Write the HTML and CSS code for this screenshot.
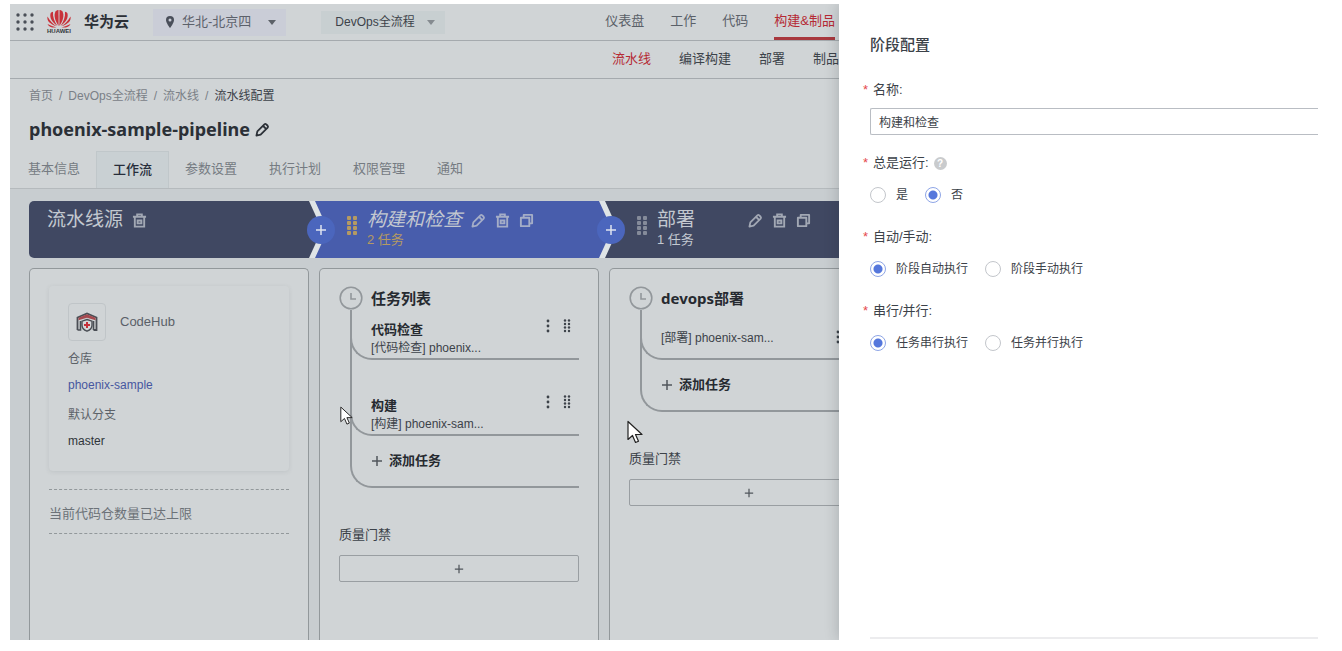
FILE: index.html
```html
<!DOCTYPE html>
<html lang="zh-CN">

  <head>
    <meta charset="utf-8">
    <title>流水线配置</title>
    <link rel="stylesheet" href="styles.css">
  </head>

  <body>

    <!-- shared icons -->
    <svg class="defs" aria-hidden="true">
      <symbol id="pencil" viewBox="0 0 16 16">
        <path d="M1.500 14.500l1-4.500L10 2.500a1.500 1.500 0 0 1 2 0l1.500 1.500a1.500 1.500 0 0 1 0 2L6 13.500z M8.500 4l3.500 3.500" fill="none" stroke="currentColor" stroke-width="1.900" stroke-linejoin="round"/>
      </symbol>
      <symbol id="trash" viewBox="0 0 16 16">
        <path d="M1 4h14M5.500 3.500V1.500h5v2M3 4.500v10h10v-10M6 8h4v3H6z" fill="none" stroke="currentColor" stroke-width="2"/>
      </symbol>
      <symbol id="copy" viewBox="0 0 16 16">
        <path d="M2 5h9v9H2zM5 4.500V2h9v9h-2.500" fill="none" stroke="currentColor" stroke-width="2" stroke-linejoin="round"/>
      </symbol>
      <symbol id="grip" viewBox="0 0 12 20">
        <g fill="currentColor">
          <rect x="1" y="0" width="4" height="4" rx="1"/><rect x="7" y="0" width="4" height="4" rx="1"/>
          <rect x="1" y="5" width="4" height="4" rx="1"/><rect x="7" y="5" width="4" height="4" rx="1"/>
          <rect x="1" y="10" width="4" height="4" rx="1"/><rect x="7" y="10" width="4" height="4" rx="1"/>
          <rect x="1" y="15" width="4" height="4" rx="1"/><rect x="7" y="15" width="4" height="4" rx="1"/>
        </g>
      </symbol>
      <symbol id="dots" viewBox="0 0 8 14">
        <g fill="currentColor">
          <circle cx="4" cy="2" r="1.400"/><circle cx="4" cy="7" r="1.400"/><circle cx="4" cy="12" r="1.400"/>
        </g>
      </symbol>
      <symbol id="drag" viewBox="0 0 8 14">
        <g fill="currentColor">
          <circle cx="2" cy="1.500" r="1.200"/><circle cx="6" cy="1.500" r="1.200"/>
          <circle cx="2" cy="5" r="1.200"/><circle cx="6" cy="5" r="1.200"/>
          <circle cx="2" cy="8.500" r="1.200"/><circle cx="6" cy="8.500" r="1.200"/>
          <circle cx="2" cy="12" r="1.200"/><circle cx="6" cy="12" r="1.200"/>
        </g>
      </symbol>
      <symbol id="plus" viewBox="0 0 12 12">
        <path d="M6 1v10M1 6h10" fill="none" stroke="currentColor" stroke-width="1.500"/>
      </symbol>
      <symbol id="clock" viewBox="0 0 24 24">
        <circle cx="12" cy="12" r="10.800" fill="none" stroke="currentColor" stroke-width="1.600"/>
        <path d="M12 7v6h5" fill="none" stroke="currentColor" stroke-width="1.600"/>
      </symbol>
      <symbol id="pointer" viewBox="0 0 16 24">
        <path d="M1 1v18l4.500-4 3 7 3-1.300-3-6.700H15z" fill="#fff" stroke="#222" stroke-width="1.200" stroke-linejoin="round"/>
      </symbol>
    </svg>

    <div class="app">

      <div class="workspace">

        <header class="topbar">
          <button class="apps" aria-label="菜单">
            <svg width="18" height="18" viewBox="0 0 18 18" fill="#4a4f57">
              <circle cx="2" cy="2" r="1.700"/><circle cx="9" cy="2" r="1.700"/><circle cx="16" cy="2" r="1.700"/>
              <circle cx="2" cy="9" r="1.700"/><circle cx="9" cy="9" r="1.700"/><circle cx="16" cy="9" r="1.700"/>
              <circle cx="2" cy="16" r="1.700"/><circle cx="9" cy="16" r="1.700"/><circle cx="16" cy="16" r="1.700"/>
            </svg>
          </button>
          <a class="logo" href="#">
            <svg width="26" height="18" viewBox="0 0 26 18" fill="#c8323a">
              <path d="M12.600 16C9 11 7.500 5 9.500 1.500 10.500.3 12 0 12.500 0z"/>
              <path d="M13.400 16C17 11 18.500 5 16.500 1.500 15.500.3 14 0 13.500 0z"/>
              <path d="M11.500 16C6 12 3.500 8 4.500 3.500 5 2.500 6 2 7 1.800 6.500 7 8.500 12 11.500 16z"/>
              <path d="M14.500 16C20 12 22.500 8 21.500 3.500 21 2.500 20 2 19 1.800 19.500 7 17.500 12 14.500 16z"/>
              <path d="M10.500 16.300C4 14 .5 11 1.500 6.500 4 11 6.500 13.500 10.500 16.300z"/>
              <path d="M15.500 16.300C22 14 25.500 11 24.500 6.500 22 11 19.500 13.500 15.500 16.300z"/>
              <path d="M10.500 17.500C6 18 3 17 1.500 14c3 1.700 6 2.500 9 3.500z"/>
              <path d="M15.500 17.500C20 18 23 17 24.500 14c-3 1.700-6 2.500-9 3.500z"/>
            </svg>
            <span class="logo-name">HUAWEI</span>
          </a>
          <span class="brand">华为云</span>
          <button class="region">
            <svg width="8" height="12" viewBox="0 0 8 12"><path d="M4 0a4 4 0 0 1 4 4c0 3-4 8-4 8S0 7 0 4a4 4 0 0 1 4-4z" fill="#4a4f5a"/><circle cx="4" cy="4" r="1.500" fill="#cbced8"/></svg>
            <span>华北-北京四</span>
            <i class="caret"></i>
          </button>
          <button class="project"><span>DevOps全流程</span><i class="caret"></i></button>
          <nav class="main-nav">
            <a href="#">仪表盘</a>
            <a href="#">工作</a>
            <a href="#">代码</a>
            <a href="#" class="active">构建&amp;制品</a>
          </nav>
        </header>

        <nav class="sub-nav">
          <a href="#" class="active">流水线</a>
          <a href="#">编译构建</a>
          <a href="#">部署</a>
          <a href="#">制品</a>
        </nav>

        <div class="breadcrumb">
          <a href="#">首页</a><span class="sep">/</span><a href="#">DevOps全流程</a><span class="sep">/</span><a href="#">流水线</a><span class="sep">/</span><span class="current">流水线配置</span>
        </div>

        <div class="page-title">
          <h1>phoenix-sample-pipeline</h1>
          <button class="icon-btn" aria-label="编辑"><svg width="15" height="15"><use href="#pencil"/></svg></button>
        </div>

        <nav class="tabs">
          <a href="#">基本信息</a>
          <a href="#" class="active">工作流</a>
          <a href="#">参数设置</a>
          <a href="#">执行计划</a>
          <a href="#">权限管理</a>
          <a href="#">通知</a>
        </nav>

        <main class="flow">

          <div class="heads">
            <div class="head first">
              <div class="head-text">
                <h2>流水线源</h2>
              </div>
              <button class="icon-btn" aria-label="删除"><svg width="15" height="15"><use href="#trash"/></svg></button>
            </div>

            <div class="head selected">
              <button class="add-stage" aria-label="添加阶段"><svg width="12" height="12"><use href="#plus"/></svg></button>
              <svg class="grip" width="12" height="20"><use href="#grip"/></svg>
              <div class="head-text">
                <h2>构建和检查</h2>
                <p>2 任务</p>
              </div>
              <button class="icon-btn" aria-label="编辑"><svg width="15" height="15"><use href="#pencil"/></svg></button>
              <button class="icon-btn" aria-label="删除"><svg width="15" height="15"><use href="#trash"/></svg></button>
              <button class="icon-btn" aria-label="复制"><svg width="15" height="15"><use href="#copy"/></svg></button>
            </div>

            <div class="head">
              <button class="add-stage" aria-label="添加阶段"><svg width="12" height="12"><use href="#plus"/></svg></button>
              <svg class="grip" width="12" height="20"><use href="#grip"/></svg>
              <div class="head-text">
                <h2>部署</h2>
                <p>1 任务</p>
              </div>
              <button class="icon-btn" aria-label="编辑"><svg width="15" height="15"><use href="#pencil"/></svg></button>
              <button class="icon-btn" aria-label="删除"><svg width="15" height="15"><use href="#trash"/></svg></button>
              <button class="icon-btn" aria-label="复制"><svg width="15" height="15"><use href="#copy"/></svg></button>
            </div>
          </div>

          <div class="stages">

            <section class="stage">
              <div class="source">
                <div class="source-head">
                  <span class="source-icon">
                    <svg width="22" height="20" viewBox="0 0 22 20">
                      <path d="M1.500 18V5.500L11 1.500l9.500 4V18h-3" fill="none" stroke="#4a4e55" stroke-width="1.800"/>
                      <path d="M1.500 18h3V9" fill="none" stroke="#4a4e55" stroke-width="1.600"/>
                      <path d="M17.500 9v9" stroke="#4a4e55" stroke-width="1.600"/>
                      <path d="M2.500 5.800L11 2.300l8.500 3.500v2.400L11 5.700 2.500 8.200z" fill="#a5494f"/>
                      <path d="M11 7.500l5 1.700v4c0 3-2.500 5-5 6-2.500-1-5-3-5-6v-4z" fill="#d5d8da" stroke="#4a4e55" stroke-width="1.400"/>
                      <path d="M11 10v6M8 13h6" stroke="#c5303a" stroke-width="2"/>
                    </svg>
                  </span>
                  <span class="source-name">CodeHub</span>
                </div>
                <dl>
                  <dt>仓库</dt>
                  <dd><a href="#">phoenix-sample</a></dd>
                  <dt>默认分支</dt>
                  <dd>master</dd>
                </dl>
              </div>
              <p class="limit">当前代码仓数量已达上限</p>
            </section>

            <section class="stage">
              <div class="group-title">
                <svg width="24" height="24"><use href="#clock"/></svg>
                <h3>任务列表</h3>
              </div>
              <ul class="tasks">
                <li class="task">
                  <div class="task-text">
                    <h4>代码检查</h4>
                    <p>[代码检查] phoenix...</p>
                  </div>
                  <svg width="8" height="14"><use href="#dots"/></svg>
                  <svg width="8" height="14"><use href="#drag"/></svg>
                </li>
                <li class="task spaced">
                  <div class="task-text">
                    <h4>构建</h4>
                    <p>[构建] phoenix-sam...</p>
                  </div>
                  <svg width="8" height="14"><use href="#dots"/></svg>
                  <svg width="8" height="14"><use href="#drag"/></svg>
                </li>
                <li class="add"><button><svg width="12" height="12"><use href="#plus"/></svg>添加任务</button></li>
              </ul>
              <h5>质量门禁</h5>
              <button class="gate" aria-label="添加质量门禁"><svg width="10" height="10"><use href="#plus"/></svg></button>
              <svg class="pointer" width="13" height="20"><use href="#pointer"/></svg>
            </section>

            <section class="stage">
              <div class="group-title">
                <svg width="24" height="24"><use href="#clock"/></svg>
                <h3>devops部署</h3>
              </div>
              <ul class="tasks">
                <li class="task single">
                  <div class="task-text">
                    <p>[部署] phoenix-sam...</p>
                  </div>
                  <svg width="8" height="14"><use href="#dots"/></svg>
                  <svg width="8" height="14"><use href="#drag"/></svg>
                </li>
                <li class="add"><button><svg width="12" height="12"><use href="#plus"/></svg>添加任务</button></li>
              </ul>
              <h5>质量门禁</h5>
              <button class="gate" aria-label="添加质量门禁"><svg width="10" height="10"><use href="#plus"/></svg></button>
              <svg class="pointer large" width="16" height="25"><use href="#pointer"/></svg>
            </section>

          </div>
        </main>
      </div>

      <aside class="drawer">
        <h2>阶段配置</h2>

        <form>
          <div class="field">
            <label class="label" for="stage-name">名称:</label>
            <input class="text" type="text" id="stage-name" value="构建和检查">
          </div>

          <fieldset>
            <legend class="label">总是运行: <span class="help">?</span></legend>
            <div class="options">
              <label><input type="radio" name="always">是</label>
              <label><input type="radio" name="always" checked>否</label>
            </div>
          </fieldset>

          <fieldset>
            <legend class="label">自动/手动:</legend>
            <div class="options">
              <label><input type="radio" name="trigger" checked>阶段自动执行</label>
              <label><input type="radio" name="trigger">阶段手动执行</label>
            </div>
          </fieldset>

          <fieldset>
            <legend class="label">串行/并行:</legend>
            <div class="options">
              <label><input type="radio" name="order" checked>任务串行执行</label>
              <label><input type="radio" name="order">任务并行执行</label>
            </div>
          </fieldset>
        </form>
      </aside>

    </div>

  </body>

</html>
```

FILE: styles.css
```css
* {
  box-sizing: border-box;
}

body {
  margin: 0;
  padding: 4px 24px 11px 10px;
  background: #fff;
  color: #3c4249;
  font: 13px/20px "Liberation Sans", "Noto Sans CJK SC", sans-serif;
}

h1, h2, h3, h4, h5, p, ul, dl, dd, fieldset {
  margin: 0;
  padding: 0;
  border: 0;
}

ul {
  list-style: none;
}

a {
  color: inherit;
  text-decoration: none;
}

button {
  padding: 0;
  border: 0;
  background: none;
  color: inherit;
  font: inherit;
  cursor: pointer;
}

svg {
  display: block;
  flex: none;
}

.defs {
  display: none;
}

.app {
  display: grid;
  grid-template-columns: minmax(0, 1fr) 479px;
  min-height: calc(100vh - 15px);
}

/* ---- workspace behind the drawer ---- */

.workspace {
  display: flex;
  flex-direction: column;
  overflow: hidden;
  background: #d0d4d6;
  white-space: nowrap;
}

.topbar {
  display: flex;
  align-items: center;
  height: 37px;
  padding: 0 4px 0 6px;
  border-bottom: 1px solid #a5aaae;
}

.logo {
  display: flex;
  flex-direction: column;
  align-items: center;
  width: 26px;
  margin: 0 12px;
}

.logo-name {
  color: #33363b;
  font-size: 6px;
  font-weight: bold;
  line-height: 6px;
}

.brand {
  width: 69px;
  color: #2c3036;
  font-size: 15px;
  font-weight: bold;
}

.region,
.project {
  display: flex;
  align-items: center;
}

.region {
  gap: 8px;
  height: 27px;
  padding: 0 10px 0 13px;
  background: #cacdd7;
  color: #5c616b;
}

.region .caret {
  margin-left: 9px;
}

.project {
  gap: 12px;
  height: 23px;
  margin-left: 35px;
  padding: 0 10px 0 14px;
  background: #c8cfd1;
  font-size: 12px;
}

.caret {
  border: 4px solid transparent;
  border-top: 5px solid #5c6168;
  border-bottom: 0;
}

.project .caret {
  border-top-color: #858b90;
}

.main-nav {
  display: flex;
  gap: 26px;
  height: 36px;
  margin-left: auto;
  color: #5a6068;
  line-height: 34px;
}

.main-nav .active {
  border-bottom: 3px solid #a8383e;
}

.main-nav .active,
.sub-nav .active {
  color: #b52a34;
}

.sub-nav {
  display: flex;
  justify-content: flex-end;
  gap: 28px;
  height: 38px;
  border-bottom: 1px solid #a5aaae;
  line-height: 36px;
}

.breadcrumb {
  margin: 7px 0 0 19px;
  color: #7a8087;
  font-size: 12px;
}

.breadcrumb .sep {
  margin: 0 6px;
}

.breadcrumb .current {
  color: #3c4249;
}

.page-title {
  display: flex;
  align-items: center;
  gap: 5px;
  margin: 11px 0 10px 19px;
  color: #2b3037;
}

h1 {
  font: bold 18px/24px "Noto Sans", sans-serif;
}

.tabs {
  display: flex;
  padding-left: 2px;
  border-bottom: 1px solid #b5babd;
  color: #757b82;
  line-height: 36px;
}

.tabs a {
  height: 37px;
  padding: 0 16px;
}

.tabs .active {
  border: 1px solid #c0c7ca;
  border-bottom: 0;
  background: #c9d0d3;
  color: #262c3a;
  font-weight: 500;
}

/* ---- stages ---- */

.flow {
  display: flex;
  flex: 1;
  flex-direction: column;
  padding: 12px 0 0 19px;
  background: #c8cdd0;
}

.heads,
.stages {
  display: grid;
  grid-template-columns: repeat(3, 280px);
  gap: 10px;
}

.heads {
  width: 860px;
  height: 57px;
  border-radius: 5px;
  background: #dfe4e6;
}

.head {
  display: flex;
  position: relative;
  align-items: flex-start;
  gap: 9px;
  padding-left: 27px;
  color: #c3c8d0;
  z-index: 0;
}

/* the coloured arrow runs a little way into the gap on either side */
.head::before {
  position: absolute;
  inset: 0 -13px 0 -4px;
  z-index: -1;
  background: #404862;
  clip-path: polygon(0 0, calc(100% - 13px) 0, 100% 50%, calc(100% - 13px) 100%, 0 100%, 13px 50%);
  content: "";
}

.head.first {
  padding-left: 18px;
}

.head.first::before {
  left: 0;
  border-radius: 5px 0 0 5px;
  clip-path: polygon(0 0, calc(100% - 13px) 0, 100% 50%, calc(100% - 13px) 100%, 0 100%);
}

.head.selected::before {
  background: #485dac;
}

.head-text {
  min-width: 82px;
  padding-top: 8px;
}

.first .head-text {
  min-width: 0;
}

.head h2 {
  font-size: 19px;
  font-weight: normal;
  line-height: 22px;
}

.head p {
  font-size: 13px;
  line-height: 18px;
}

.head.selected h2 {
  font-style: italic;
}

.head.selected p,
.head.selected .grip {
  color: #b59a62;
}

.head .icon-btn {
  margin-top: 12px;
  opacity: .75;
}

.grip {
  margin-top: 15px;
  color: #858b9a;
}

.add-stage {
  display: flex;
  position: absolute;
  top: 15px;
  left: -12px;
  align-items: center;
  justify-content: center;
  width: 28px;
  height: 28px;
  border-radius: 50%;
  background: #4b66bd;
  color: #dfe4ef;
}

.stages {
  flex: 1;
  margin-top: 10px;
}

.stage {
  position: relative;
  padding: 17px 19px 0;
  border: 1px solid #92989b;
  border-bottom: 0;
  border-radius: 5px 5px 0 0;
  background: #d0d4d6;
}

.source {
  height: 185px;
  padding: 17px 19px;
  border-radius: 4px;
  box-shadow: 0 1px 4px rgba(90, 100, 105, .14);
}

.source-head {
  display: flex;
  align-items: center;
  gap: 14px;
}

.source-icon {
  display: flex;
  align-items: center;
  justify-content: center;
  width: 38px;
  height: 38px;
  border: 1px solid #c0c5c8;
  border-radius: 4px;
}

.source-name {
  color: #5a6068;
}

.source dl {
  margin-top: 8px;
  font-size: 12px;
}

.source dt {
  color: #5c6268;
}

.source dd {
  margin: 6px 0 10px;
  color: #2f3439;
}

.source a {
  color: #4757a0;
}

.limit {
  margin-top: 18px;
  padding: 14px 0 9px;
  border: dashed #92989b;
  border-width: 1px 0;
  color: #6c7278;
}

.group-title {
  display: flex;
  align-items: center;
  gap: 8px;
  color: #92979b;
}

.group-title h3 {
  color: #262a30;
  font: bold 15px/24px "Noto Sans", "Noto Sans CJK SC", sans-serif;
}

.tasks {
  margin-left: 11px;
  border: solid #92979b;
  border-width: 0 0 2px 2px;
  border-bottom-left-radius: 22px;
}

.task {
  display: flex;
  align-items: flex-end;
  gap: 11px;
  height: 50px;
  margin-left: -2px;
  padding: 0 8px 0 19px;
  border: solid #92979b;
  border-width: 0 0 2px 2px;
  border-bottom-left-radius: 22px;
}

.task.spaced {
  height: 76px;
}

.task-text {
  flex: 1;
}

.task h4 {
  color: #262a30;
  font-size: 13px;
  line-height: 19px;
}

.task p {
  font-size: 12px;
  line-height: 19px;
}

.task svg {
  margin-bottom: 25px;
}

.task.single .task-text {
  margin-bottom: 10px;
}

.task.single svg {
  margin-bottom: 14px;
}

.add {
  height: 50px;
  padding: 15px 0 0 19px;
}

.add button {
  display: flex;
  align-items: center;
  gap: 6px;
  color: #262a30;
  font-weight: bold;
}

.add svg {
  color: #50565c;
}

h5 {
  margin-top: 37px;
  font-size: 13px;
  font-weight: normal;
}

.gate {
  display: flex;
  align-items: center;
  justify-content: center;
  width: 100%;
  height: 27px;
  margin-top: 10px;
  border: 1px solid #999ea2;
  border-radius: 2px;
  color: #50565c;
}

.pointer {
  position: absolute;
  top: 137px;
  left: 20px;
}

.pointer.large {
  top: 151px;
  left: 17px;
}

/* ---- drawer ---- */

.drawer {
  display: flex;
  position: relative;
  flex-direction: column;
  padding: 31px 0 1px 31px;
  background: #fff;
  box-shadow: -2px 0 12px rgba(30, 40, 45, .18);
  clip-path: inset(0 0 0 -20px);
}

.drawer h2 {
  font-size: 15px;
  font-weight: 500;
}

.drawer form {
  flex: 1;
  margin-top: 25px;
  border-bottom: 2px solid #ececee;
}

.label {
  display: flex;
  align-items: center;
  height: 20px;
  margin-left: -7px;
  padding: 0;
}

.label::before {
  width: 10px;
  color: #e5484d;
  content: "*";
}

.help {
  width: 13px;
  height: 13px;
  margin-left: 5px;
  border-radius: 50%;
  background: #c9cbcd;
  color: #fff;
  font-size: 10px;
  font-weight: bold;
  line-height: 13px;
  text-align: center;
}

.text {
  display: block;
  width: 100%;
  height: 27px;
  margin: 8px 0 18px;
  padding: 0 8px;
  border: 1px solid #b9bdc3;
  border-right: 0;
  border-radius: 2px 0 0 2px;
  color: inherit;
  font: inherit;
  font-size: 12px;
}

fieldset {
  margin-bottom: 22px;
}

.options {
  display: flex;
  gap: 17px;
  margin-top: 12px;
  font-size: 12px;
}

.options label {
  display: flex;
  align-items: center;
  gap: 10px;
}

.options input {
  width: 16px;
  height: 16px;
  margin: 0;
  border: 1px solid #c3c6cb;
  border-radius: 50%;
  appearance: none;
}

.options input:checked {
  border-color: #8ea5e6;
  background: radial-gradient(circle, #5577dc 0 4px, #fff 5px);
}
```
